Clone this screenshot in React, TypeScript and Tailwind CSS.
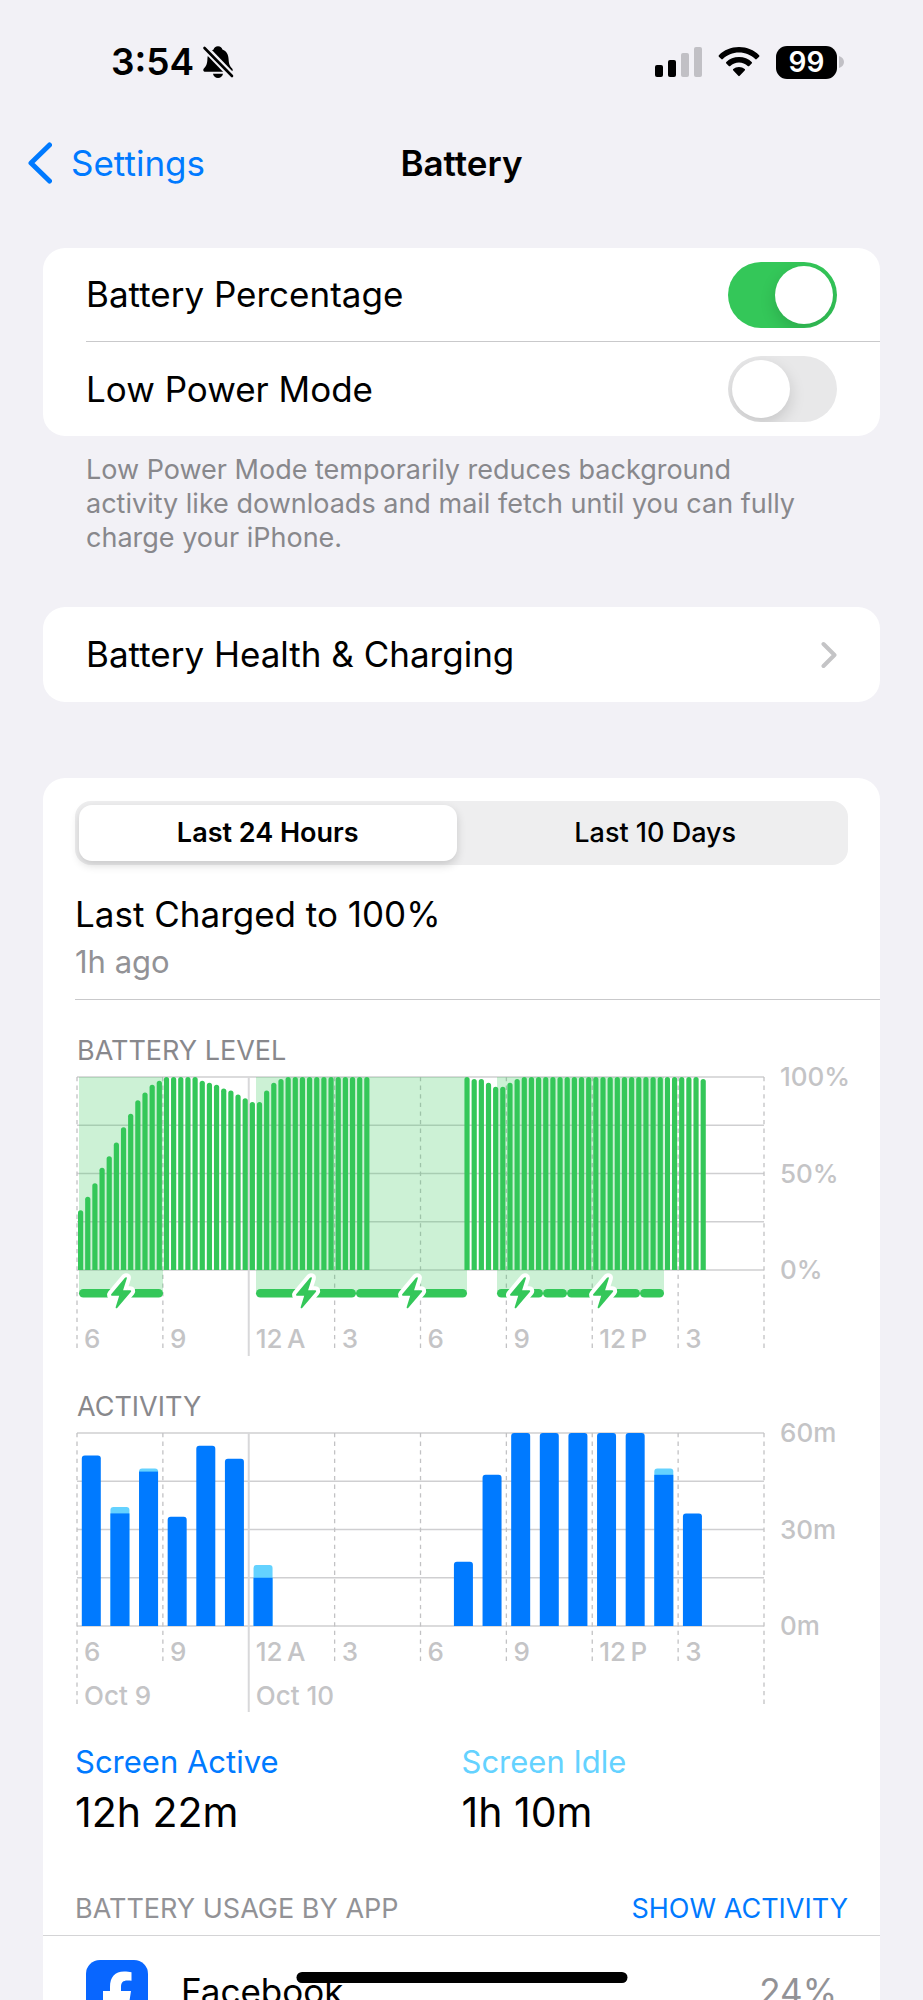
import React from 'react'
import {FC, useState} from 'react'

const levels: (number | null)[] = [
    31, 38, 45, 53, 59, 66, 74, 81, 88, 92, 96, 98,
    100, 100, 100, 100, 100, 98, 97, 96, 94, 93, 91, 89,
    87, 87, 93, 97, 99, ...Array(12).fill(100),
    ...Array(13).fill(null),
    100, 99, 99, 97, 95, 95, 97, 99, ...Array(25).fill(100), 99,
]

// x ranges in chart units
const charging = [[4, 88], [181, 281], [281, 392], [422, 468], [468, 492], [492, 565], [565, 589]]
const bolts = [46, 231, 337, 445, 528]

// [hour slot, total minutes, active minutes]
const activity = [
    [0, 53, 53], [1, 37, 35], [2, 49, 48], [3, 34, 34], [4, 56, 56], [5, 52, 52], [6, 19, 15],
    [13, 20, 20], [14, 47, 47], [15, 60, 60], [16, 60, 60], [17, 60, 60], [18, 60, 60], [19, 60, 60],
    [20, 49, 47], [21, 35, 35],
]

const hours = ['6', '9', '12\u2009A', '3', '6', '9', '12\u2009P', '3', '']

const LEFT = 2
const TOP = 10
const WIDTH = 687
const HEIGHT = 193
const BOTTOM = TOP + HEIGHT

const Grid: FC<{ labels: string[], tick: number, edge: number, solid: number, textY: number }> = ({ labels, tick, edge, solid, textY }) => (
    <>
        {[0, 1, 2, 3, 4].map(i => (
            <line key={i} x1={LEFT} x2={LEFT + WIDTH} y1={TOP + i * HEIGHT / 4} y2={TOP + i * HEIGHT / 4} stroke="#cfcfd1" strokeWidth="1.4" />
        ))}
        {hours.map((hour, i) => {
            const x = LEFT + i * WIDTH / 8
            const end = i === 2 ? solid : i === 0 || i === 8 ? edge : tick
            return (
                <g key={i}>
                    <line x1={x} x2={x} y1={TOP} y2={end} stroke={i === 2 ? '#d8d8da' : '#c2c2c4'} strokeWidth={i === 2 ? 2 : 1.3} strokeDasharray={i === 2 ? undefined : '4.3 4.3'} />
                    <text x={x + 7} y={textY} className="fill-[#c4c4c6] text-[26px] font-medium">{hour}</text>
                </g>
            )
        })}
        {labels.map((label, i) => (
            <text key={label} x="705" y={TOP + i * HEIGHT / 2 + 9} className="fill-[#c4c4c6] text-[26px] font-medium">{label}</text>
        ))}
    </>
)

const LevelChart: FC = () => (
    <svg viewBox="0 0 773 290" className="block w-full overflow-visible" role="img" aria-label="Battery level">
        <Grid labels={['100%', '50%', '0%']} tick={285} edge={285} solid={289} textY={281} />
        {charging.map(([from, to]) => (
            <rect key={from} x={from} y={TOP} width={to - from} height={217} fill="#34c759" fillOpacity="0.25" />
        ))}
        {levels.map((level, i) => {
            if (level === null) return null
            const x = LEFT + 1 + i * WIDTH / 96
            const y = BOTTOM - level / 100 * HEIGHT
            return <path key={i} d={`M${x} ${BOTTOM}V${y + 2.6}a2.6 2.6 0 0 1 5.2 0V${BOTTOM}z`} fill="#34c759" />
        })}
        {charging.map(([from, to]) => (
            <rect key={from} x={from} y={222} width={to - from} height={8.6} rx={4.3} fill="#34c759" />
        ))}
        {bolts.map(x => (
            <path
                key={x}
                transform={`translate(${x} 226)`}
                d="M4 -15.2 -9.6 1C-10.4 2-10 2.7-9 2.7H-1.8L-5.3 14C-5.6 15.4-4.5 15.8-3.6 14.8L9.8-1C10.6-2 10.2-2.8 9.2-2.8H2.1L5.8-14.4C6.2-15.8 5-16.3 4-15.2Z"
                fill="#34c759"
                stroke="#fff"
                strokeWidth="8"
                strokeLinejoin="round"
                paintOrder="stroke"
            />
        ))}
    </svg>
)

const ActivityChart: FC = () => (
    <svg viewBox="0 0 773 290" className="block w-full overflow-visible" role="img" aria-label="Activity">
        <Grid labels={['60m', '30m', '0m']} tick={242} edge={285} solid={289} textY={238} />
        <text x={LEFT + 7} y="282" className="fill-[#c4c4c6] text-[26px] font-medium">Oct 9</text>
        <text x={LEFT + 7 + WIDTH / 4} y="282" className="fill-[#c4c4c6] text-[26px] font-medium">Oct 10</text>
        {activity.map(([slot, total, active]) => {
            const x = LEFT + 4.8 + slot * WIDTH / 24
            const y = BOTTOM - total / 60 * HEIGHT
            const mid = BOTTOM - active / 60 * HEIGHT
            return (
                <g key={slot}>
                    <path d={`M${x} ${BOTTOM}V${y + 3}q0-3 3-3h13q3 0 3 3V${BOTTOM}z`} fill={total > active ? '#64d2ff' : '#007aff'} />
                    {total > active && <rect x={x} y={mid} width="19" height={BOTTOM - mid} fill="#007aff" />}
                </g>
            )
        })}
    </svg>
)

const Toggle: FC<{ id: string, initial: boolean }> = ({ id, initial }) => {
    const [on, setOn] = useState(initial)
    return (
        <input
            id={id}
            type="checkbox"
            role="switch"
            checked={on}
            onChange={() => setOn(!on)}
            className="flex h-[66px] w-[109px] shrink-0 appearance-none overflow-hidden rounded-full bg-[#e8e8e9] p-1 before:block before:size-[58px] before:rounded-full before:bg-white before:shadow-[0_6px_16px_rgba(0,0,0,0.15)] checked:justify-end checked:bg-[#34c759]"
        />
    )
}

const StatusBar: FC = () => (
    <div className="flex h-11 items-center justify-between pr-[79px] pl-[111px]">
        <div className="flex items-center gap-2">
            <span className="text-[37px] font-semibold">3:54</span>
            <svg viewBox="0 0 32 34" className="h-[34px] w-8">
                <path d="M16 1.2c2.4 0 4 1.5 4.4 3.3 4.2 1.6 6 5.2 6.2 9.8.2 5 1.4 7 3.3 9 1.5 1.6.9 3.5-1.3 3.5H3.4c-2.2 0-2.8-1.9-1.3-3.5 1.9-2 3.1-4 3.3-9 .2-4.6 2-8.2 6.2-9.8C12 2.7 13.6 1.2 16 1.2Z" />
                <path d="M11 28.8h10c-.4 2.5-2.5 4.2-5 4.2s-4.600-1.700-5-4.200Z" />
                <path d="M3.5 3.5 30.5 31.5" stroke="#f2f1f6" strokeWidth="7" />
                <path d="M2.5 3 30 31" stroke="#000" strokeWidth="2.6" strokeLinecap="round" />
            </svg>
        </div>
        <div className="flex items-center">
            <svg viewBox="0 0 47 32" className="h-8 w-[47px]">
                <rect x="0" y="19" width="8" height="12" rx="2" />
                <rect x="13" y="14" width="8" height="17" rx="2" />
                <rect x="26" y="7" width="8" height="24" rx="2" fill="#c1c0c5" />
                <rect x="39" y="1" width="8" height="30" rx="2" fill="#c1c0c5" />
            </svg>
            <svg viewBox="0 0 42 32" className="ml-4 h-8 w-[42px]">
                <path d="M21 1C13 1 6 4 .9 9.2c-.5.5-.5 1 0 1.5l2.4 2.4c.4.4 1 .4 1.5 0C9 9 14.7 6.6 21 6.6s12 2.4 16.2 6.5c.5.4 1.1.4 1.5 0l2.4-2.4c.5-.5.5-1 0-1.5C36 4 29 1 21 1Z" />
                <path d="M21 11c-5 0-9.4 1.9-12.7 4.9-.5.5-.5 1 0 1.5l2.5 2.5c.4.4 1 .4 1.5 0 2.3-2 5.400-3.300 8.700-3.300s6.400 1.300 8.700 3.300c.5.4 1.1.4 1.5 0l2.5-2.5c.5-.5.5-1 0-1.5C30.4 12.9 26 11 21 11Z" />
                <path d="M21 21c-2.2 0-4.2.8-5.7 2.1-.5.4-.5 1 0 1.5l5 5.2c.4.5 1 .5 1.4 0l5-5.2c.5-.5.5-1.1 0-1.5C25.2 21.8 23.2 21 21 21Z" />
            </svg>
            <span className="ml-4 flex h-[33px] w-[61px] items-center justify-center rounded-[11px] bg-black text-[28px] font-semibold text-white">99</span>
            <svg viewBox="0 0 5 12" className="ml-0.5 h-3 w-[5px]">
                <path d="M0 0c3 1 5 3 5 6s-2 5-5 6Z" fill="#c1c0c5" />
            </svg>
        </div>
    </div>
)

const App: FC = () => {
    const [tab, setTab] = useState(0)
    return (
        <div className="relative h-screen overflow-hidden bg-[#f2f1f6] pt-10 font-[Inter,sans-serif] text-black">
            <StatusBar />
            <header className="mt-[53px] grid h-12 grid-cols-3 items-center px-7 text-[35px]">
                <a href="#settings" className="flex items-center gap-[19px] text-[#007aff]">
                    <svg viewBox="0 0 24 42" className="h-[42px] w-6" fill="none" stroke="currentColor" strokeWidth="5" strokeLinecap="round" strokeLinejoin="round">
                        <path d="M21.5 3 3 21l18.5 18" />
                    </svg>
                    Settings
                </a>
                <h1 className="text-center font-semibold">Battery</h1>
            </header>

            <main className="px-[43px] text-[35px]">
                <section className="mt-[63px] rounded-[22px] bg-white pl-[43px]">
                    <div className="flex h-[94px] items-center justify-between border-b border-[#c9c9cb] pr-[43px]">
                        <label htmlFor="percentage">Battery Percentage</label>
                        <Toggle id="percentage" initial={true} />
                    </div>
                    <div className="flex h-[94px] items-center justify-between pr-[43px]">
                        <label htmlFor="low-power">Low Power Mode</label>
                        <Toggle id="low-power" initial={false} />
                    </div>
                </section>
                <p className="mt-[17px] pr-[70px] pl-[43px] text-[27px] leading-[34px] text-[#88888c]">
                    Low Power Mode temporarily reduces background activity like downloads and mail fetch until you can fully charge your iPhone.
                </p>

                <a href="#health" className="mt-[52px] flex h-[95px] items-center justify-between rounded-[22px] bg-white px-[43px]">
                    Battery Health &amp; Charging
                    <svg viewBox="0 0 16 28" className="h-7 w-4" fill="none" stroke="#c4c4c6" strokeWidth="4" strokeLinecap="round" strokeLinejoin="round">
                        <path d="M2.5 3 13.5 14l-11 11" />
                    </svg>
                </a>

                <section className="mt-[76px] rounded-t-[22px] bg-white pt-[23px]">
                    <div className="mx-8 flex h-16 gap-2.5 rounded-[16px] bg-[#eeeeef] p-1 text-[27px] font-medium">
                        {['Last 24 Hours', 'Last 10 Days'].map((name, i) => (
                            <button
                                key={name}
                                onClick={() => setTab(i)}
                                className={tab === i ? 'flex-1 rounded-[13px] bg-white font-semibold shadow-[0_4px_10px_rgba(0,0,0,0.16)]' : 'flex-1'}
                            >
                                {name}
                            </button>
                        ))}
                    </div>
                    <div className="mt-[27px] ml-8 border-b border-[#c9c9cb] pb-[17px]">
                        <h2 className="leading-[44px]">Last Charged to 100%</h2>
                        <p className="mt-1.5 text-[31px] leading-10 text-[#929296]">1h ago</p>
                    </div>
                    <div className="px-8">
                        <h3 className="mt-[35px] pl-0.5 text-[27px] leading-8 text-[#88888c]">BATTERY LEVEL</h3>
                        <LevelChart />
                        <h3 className="mt-[34px] pl-0.5 text-[27px] leading-8 text-[#88888c]">ACTIVITY</h3>
                        <ActivityChart />
                        <div className="mt-[29px] grid grid-cols-2">
                            <div>
                                <p className="text-[31px] leading-10 text-[#007aff]">Screen Active</p>
                                <p className="mt-1 text-[41px] leading-[52px]">12h 22m</p>
                            </div>
                            <div>
                                <p className="text-[31px] leading-10 text-[#64d2ff]">Screen Idle</p>
                                <p className="mt-1 text-[41px] leading-[52px]">1h 10m</p>
                            </div>
                        </div>
                    </div>
                    <div className="mt-[55px] flex justify-between border-b border-[#d4d4d6] px-8 pb-2.5 text-[27px] leading-8">
                        <h3 className="text-[#929296]">BATTERY USAGE BY APP</h3>
                        <button className="text-[#007aff]">SHOW ACTIVITY</button>
                    </div>
                    <div className="flex items-center px-[43px] pt-6">
                        <svg viewBox="0 0 62 62" className="size-[62px]">
                            <rect width="62" height="62" rx="14" fill="#0866ff" />
                            <path d="M24 62V44h-7V31h7v-4c0-10 5-15.500 14-15.500 3 0 5.500.3 7.500.8v8.500c-1-.2-2.500-.3-4-.3-4.500 0-6.500 2-6.500 6.500V31h10l-2 13h-8v18Z" fill="#fff" />
                        </svg>
                        <span className="ml-[33px] flex-1">Facebook</span>
                        <span className="text-[#929296]">24%</span>
                    </div>
                </section>
            </main>

            <div className="absolute bottom-[17px] left-1/2 h-[11px] w-[331px] -translate-x-1/2 rounded-full bg-black"></div>
        </div>
    )
}

export default App
